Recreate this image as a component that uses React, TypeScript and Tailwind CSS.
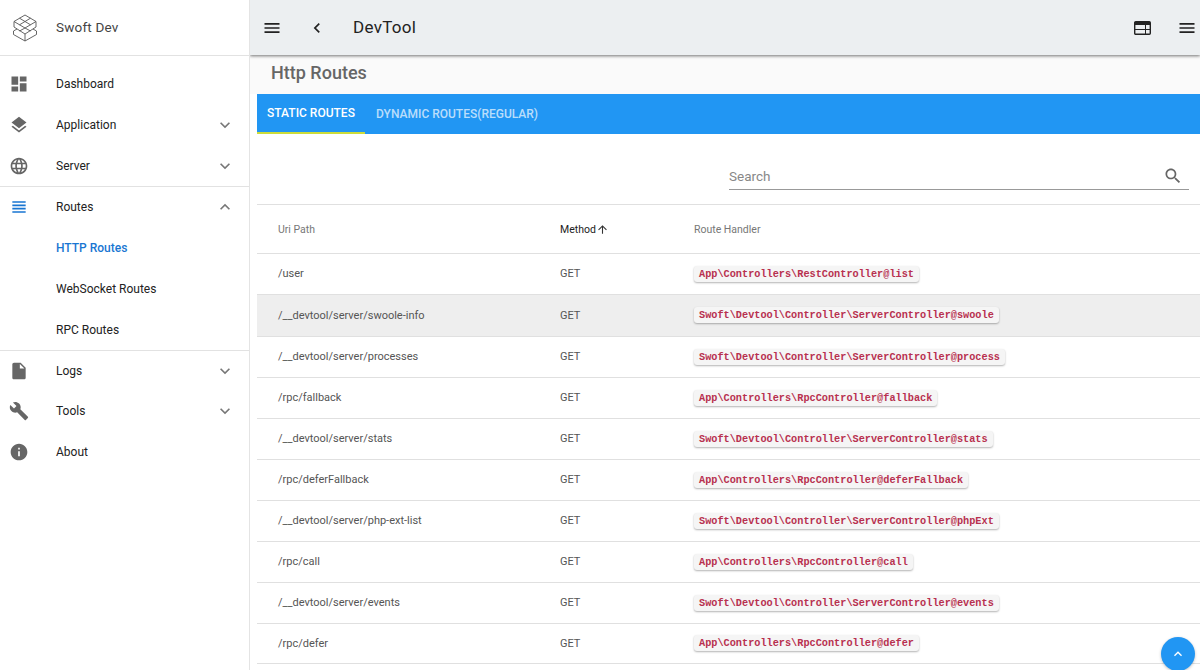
import React from 'react';

const P = {
  dashboard: 'M3 13h8V3H3v10zm0 8h8v-6H3v6zm10 0h8V11h-8v10zm0-18v6h8V3h-8z',
  layers: 'M11.99 18.54l-7.37-5.73L3 14.07l9 7 9-7-1.63-1.27-7.38 5.74zM12 16l7.36-5.73L21 9l-9-7-9 7 1.63 1.27L12 16z',
  globe: 'M11.99 2C6.47 2 2 6.48 2 12s4.47 10 9.99 10C17.52 22 22 17.52 22 12S17.52 2 11.99 2zm6.93 6h-2.95c-.32-1.25-.78-2.45-1.38-3.56 1.84.63 3.37 1.91 4.33 3.56zM12 4.04c.83 1.2 1.48 2.53 1.91 3.96h-3.82c.43-1.43 1.08-2.76 1.91-3.96zM4.26 14C4.1 13.36 4 12.69 4 12s.1-1.36.26-2h3.38c-.08.66-.14 1.32-.14 2 0 .68.06 1.34.14 2H4.26zm.82 2h2.95c.32 1.25.78 2.45 1.38 3.56-1.84-.63-3.37-1.9-4.33-3.56zm2.95-8H5.08c.96-1.66 2.49-2.93 4.33-3.56C8.81 5.55 8.35 6.75 8.03 8zM12 19.96c-.83-1.2-1.48-2.53-1.91-3.96h3.82c-.43 1.43-1.08 2.76-1.91 3.96zM14.34 14H9.66c-.09-.66-.16-1.32-.16-2 0-.68.07-1.35.16-2h4.68c.09.65.16 1.32.16 2 0 .68-.07 1.34-.16 2zm.25 5.56c.6-1.11 1.06-2.31 1.38-3.56h2.95c-.96 1.65-2.49 2.93-4.33 3.56zM16.36 14c.08-.66.14-1.32.14-2 0-.68-.06-1.34-.14-2h3.38c.16.64.26 1.31.26 2s-.1 1.36-.26 2h-3.38z',
  headline: 'M4 15h16v-2H4v2zm0 4h16v-2H4v2zm0-8h16V9H4v2zm0-6v2h16V5H4z',
  file: 'M6 2c-1.1 0-1.99.9-1.99 2L4 20c0 1.1.89 2 1.99 2H18c1.1 0 2-.9 2-2V8l-6-6H6zm7 7V3.5L18.5 9H13z',
  build: 'M22.7 19l-9.1-9.1c.9-2.3.4-5-1.5-6.9-2-2-5-2.4-7.4-1.3L9 6 6 9 1.6 4.7C.4 7.1.9 10.1 2.9 12.1c1.9 1.9 4.6 2.4 6.9 1.5l9.1 9.1c.4.4 1 .4 1.4 0l2.3-2.3c.5-.4.5-1.1.1-1.4z',
  info: 'M12 2C6.48 2 2 6.48 2 12s4.48 10 10 10 10-4.48 10-10S17.52 2 12 2zm1 15h-2v-6h2v6zm0-8h-2V7h2v2z',
  down: 'M16.59 8.59L12 13.17 7.41 8.59 6 10l6 6 6-6z',
  up: 'M12 8l-6 6 1.41 1.41L12 10.83l4.59 4.58L18 14z',
  menu: 'M3 18h18v-2H3v2zm0-5h18v-2H3v2zm0-7v2h18V6H3z',
  back: 'M15.41 7.41L14 6l-6 6 6 6 1.41-1.41L10.83 12z',
  search: 'M15.5 14h-.79l-.28-.27C15.41 12.59 16 11.11 16 9.5 16 5.91 13.09 3 9.5 3S3 5.91 3 9.5 5.91 16 9.5 16c1.61 0 3.09-.59 4.23-1.57l.27.28v.79l5 4.99L20.49 19l-4.99-5zm-6 0C7.01 14 5 11.99 5 9.5S7.01 5 9.5 5 14 7.01 14 9.5 11.99 14 9.5 14z',
  arrow: 'M4 12l1.41 1.41L11 7.83V20h2V7.83l5.58 5.59L20 12l-8-8-8 8z',
};

const Icon = ({ d, className }: { d: string; className: string }) => (
  <svg viewBox="0 0 24 24" fill="currentColor" className={className}>
    <path d={d} />
  </svg>
);

const NavItem = ({ icon, label, caret, iconClass, height }: { icon?: string; label: string; caret?: string; iconClass?: string; height?: string }) => (
  <div className={`flex items-center ${height || 'h-[41px]'}`}>
    <div className="flex w-[56px] shrink-0 items-center pl-[8.5px]">
      {icon && <Icon d={icon} className={iconClass || 'h-5 w-5 text-[#666]'} />}
    </div>
    <span className="flex-1 text-[12px] text-[#222]">{label}</span>
    {caret && <Icon d={caret} className="mr-[14px] h-5 w-5 text-[#777]" />}
  </div>
);

const rows = [
  ['/user', 'App\\Controllers\\RestController@list'],
  ['/__devtool/server/swoole-info', 'Swoft\\Devtool\\Controller\\ServerController@swoole'],
  ['/__devtool/server/processes', 'Swoft\\Devtool\\Controller\\ServerController@process'],
  ['/rpc/fallback', 'App\\Controllers\\RpcController@fallback'],
  ['/__devtool/server/stats', 'Swoft\\Devtool\\Controller\\ServerController@stats'],
  ['/rpc/deferFallback', 'App\\Controllers\\RpcController@deferFallback'],
  ['/__devtool/server/php-ext-list', 'Swoft\\Devtool\\Controller\\ServerController@phpExt'],
  ['/rpc/call', 'App\\Controllers\\RpcController@call'],
  ['/__devtool/server/events', 'Swoft\\Devtool\\Controller\\ServerController@events'],
  ['/rpc/defer', 'App\\Controllers\\RpcController@defer'],
];

export default function App() {
  return (
    <div className="flex h-[670px] w-[1200px] overflow-hidden bg-white font-['Roboto',sans-serif]">
      {/* Sidebar */}
      <aside className="relative z-20 w-[250px] shrink-0 border-r border-[#e4e4e4] bg-white">
        <div className="flex h-[56px] items-center border-b border-[#e2e2e2]">
          <div className="flex w-[56px] shrink-0 pl-[12px]">
            <svg viewBox="0 0 26 28" className="h-[28px] w-[26px]" fill="none" stroke="#555" strokeWidth="0.9">
              <path d="M13 1L24 7.5 13 14 2 7.5z" />
              <path d="M7.5 4.2L18.5 10.8M18.5 4.2L7.5 10.8" />
              <path d="M2 7.5V13L13 20 24 13V7.5" />
              <path d="M5 15L1.5 17 1.5 20.5 13 27 24.5 20.5 24.5 17 21 15" />
              <path d="M13 20V27M7.5 17L13 14 18.5 17" />
            </svg>
          </div>
          <span className="text-[13.5px] tracking-[0.2px] text-[#444]">Swoft Dev</span>
        </div>
        <div className="pt-[7px]">
          <NavItem icon={P.dashboard} label="Dashboard" />
          <NavItem icon={P.layers} label="Application" caret={P.down} />
          <NavItem icon={P.globe} label="Server" caret={P.down} />
        </div>
        <div className="border-t border-[#e2e2e2]">
          <NavItem icon={P.headline} iconClass="h-5 w-5 text-[#1976d2]" label="Routes" caret={P.up} height="h-[40px]" />
          <div className="flex h-[41px] items-center pl-[56px] text-[12px] font-medium text-[#1976d2]">HTTP Routes</div>
          <NavItem label="WebSocket Routes" />
          <NavItem label="RPC Routes" />
        </div>
        <div className="border-t border-[#e2e2e2]">
          <NavItem icon={P.file} label="Logs" caret={P.down} height="h-[39px]" />
          <NavItem icon={P.build} label="Tools" caret={P.down} />
          <NavItem icon={P.info} label="About" />
        </div>
      </aside>

      {/* Main */}
      <main className="relative min-w-0 flex-1">
        <header className="relative z-10 flex h-[55px] items-center bg-[#eceff1] pl-[12px] pr-[3.5px] shadow-[0_1px_3px_rgba(0,0,0,0.55)]">
          <Icon d={P.menu} className="h-5 w-5 text-[#222]" />
          <Icon d={P.back} className="ml-[24.5px] h-5 w-5 text-[#222]" />
          <span className="ml-[26.5px] flex-1 text-[17px] tracking-[0.3px] text-[#222]">DevTool</span>
          <svg viewBox="0 0 17 14" className="h-[14px] w-[17px]" fill="none" stroke="#222">
            <rect x="0.7" y="0.7" width="15.6" height="12.6" rx="1" strokeWidth="1.4" />
            <path d="M1 2.5H16" strokeWidth="3" />
            <path d="M1 8.5H16M11.5 4V13" strokeWidth="1" />
          </svg>
          <Icon d={P.menu} className="ml-[25.5px] h-5 w-5 text-[#222]" />
        </header>

        <div className="flex h-[39px] items-center bg-[#fafafa] pb-[4px] pl-[21px]">
          <h2 className="text-[18px] font-medium text-[#666]">Http Routes</h2>
        </div>

        <div className="ml-[7px]">
          <div className="flex h-[40px] items-stretch bg-[#2196f3] text-[12px] font-medium">
            <div className="flex w-[108px] items-center justify-center border-b-2 border-[#cddc39] text-white">STATIC ROUTES</div>
            <div className="flex items-center px-[11px] text-white/70">DYNAMIC ROUTES(REGULAR)</div>
          </div>

          <div className="flex h-[71px] justify-end border-b border-[#e0e0e0] pr-[11px]">
            <div className="mt-[27px] flex h-[29px] w-[460px] items-center justify-between border-b border-[#999] pt-[2px]">
              <span className="text-[13.5px] text-[#888]">Search</span>
              <Icon d={P.search} className="mr-[6.5px] h-5 w-5 text-[#666]" />
            </div>
          </div>

          <table className="w-full table-fixed border-collapse text-left text-[11px]">
            <thead>
              <tr className="h-[48px] border-b border-[#e0e0e0] text-[10.5px]">
                <th className="w-[303px] pl-[21px] pt-[2px] font-normal text-[#777]">Uri Path</th>
                <th className="w-[134px] pl-0 pt-[2px] font-normal text-[#222]">
                  <span className="flex items-center">
                    Method
                    <Icon d={P.arrow} className="h-[13px] w-[13px] text-[#333]" />
                  </span>
                </th>
                <th className="pt-[2px] font-normal text-[#777]">Route Handler</th>
              </tr>
            </thead>
            <tbody>
              {rows.map(([uri, handler], i) => (
                <tr
                  key={uri}
                  className={`border-b border-[#e0e0e0] ${i === 1 ? 'h-[42px] bg-[#eeeeee]' : i === 9 ? 'h-[40px]' : 'h-[41px]'}`}
                >
                  <td className="pl-[21px] pt-[2px] text-[#555]">{uri}</td>
                  <td className="pt-[2px] text-[#555]">GET</td>
                  <td className="pt-[1px]">
                    <code className="inline-block h-[16px] rounded-[3px] bg-[#f5f5f5] px-[5px] font-['Liberation_Mono',monospace] text-[10.24px] font-bold leading-[16px] text-[#b8304f] shadow-[0_1px_2px_rgba(0,0,0,0.3)]">
                      {handler}
                    </code>
                  </td>
                </tr>
              ))}
            </tbody>
          </table>
        </div>

        <button className="absolute left-[911px] top-[637px] z-10 flex h-[34px] w-[34px] items-center justify-center rounded-full bg-[#2196f3] shadow-[0_1px_3px_rgba(0,0,0,0.25)]">
          <Icon d={P.up} className="h-4 w-4 text-white" />
        </button>
      </main>
    </div>
  );
}
